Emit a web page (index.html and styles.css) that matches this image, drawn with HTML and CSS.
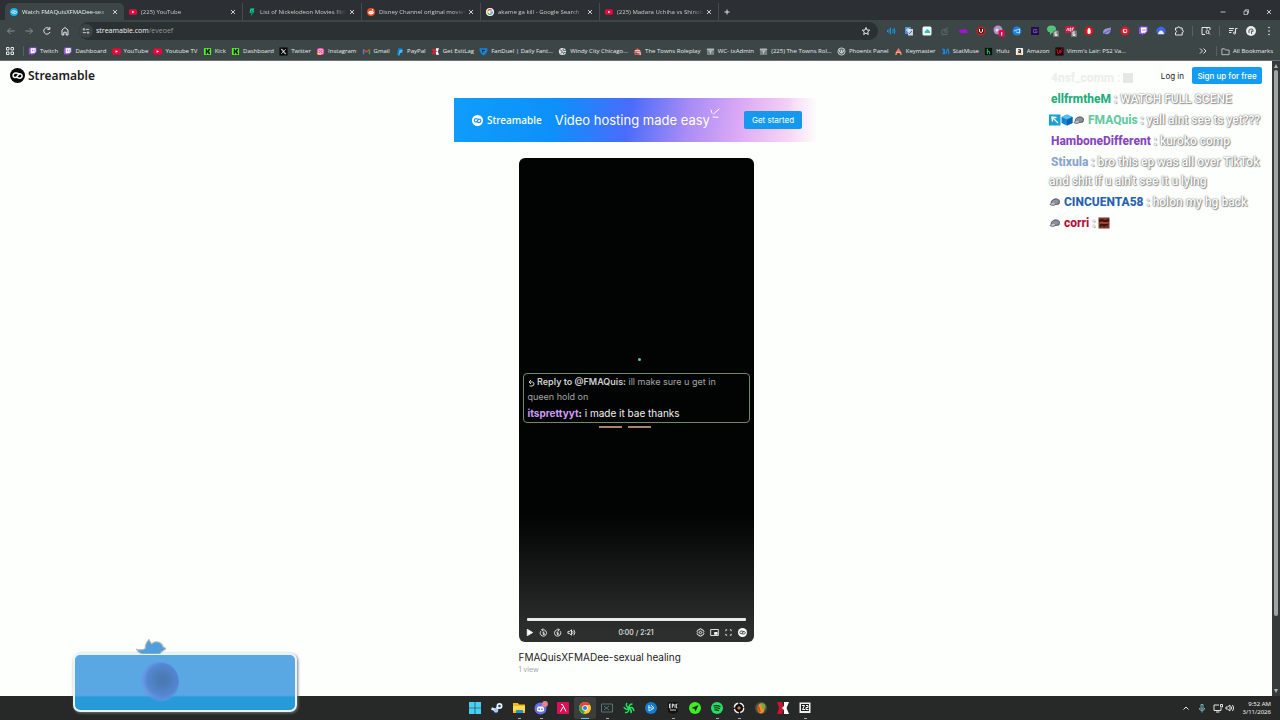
FILE: index.html
```html
<!DOCTYPE html>
<html lang="en">
<head>
<meta charset="utf-8">
<title>FMAQuisXFMADee-sexual healing</title>
<link rel="stylesheet" href="styles.css">
</head>
<body>
<svg class="defs" aria-hidden="true">
  <symbol id="loop" viewBox="0 0 16 16"><circle cx="8" cy="8" r="8" fill="currentColor" stroke="none"/><path class="loop-line" d="M9.500 6.100 6.700 5.400C4.400 5 3 6.600 3.300 8.300c.3 1.900 2.700 2.500 4 .9l1.600-2c1.200-1.600 3.700-1 4 .8.3 1.900-1.300 3.200-3.500 2.700L6.800 10" fill="none" stroke-width="1.600" stroke-linecap="round"/></symbol>
  <symbol id="close" viewBox="0 0 8 8"><path d="M2 2l4 4M6 2 2 6" stroke="#dfe3e4" stroke-width=".9"/></symbol>
  <symbol id="yt" viewBox="0 0 10 10"><rect x="0" y="1.500" width="10" height="7" rx="2" fill="#e5093b"/><path d="M4 3.500v3L6.700 5z" fill="#fff"/></symbol>
  <symbol id="twitch" viewBox="0 0 10 10"><path d="M2 .5h7.500v5L7 8H5.500L4 9.500V8H1V2.500z" fill="#9a58e8"/><path d="M3 1.500h5.500v3.700L7 6.700H5L4 7.600v-.9H3z" fill="#fff"/><path d="M5 3v2M7 3v2" stroke="#9a58e8" stroke-width=".8"/></symbol>
  <symbol id="kick" viewBox="0 0 10 10"><rect x="1" y="1" width="8" height="8" rx="1" fill="#4dfa1b"/><path d="M3 2h1.400v2h.8V3H6V2h1.800v2H7v2h.8v2H6V7h-.8V6h-.8v2H3z" fill="#10220c"/></symbol>
  <symbol id="box" viewBox="0 0 10 10"><rect x="1" y="1" width="8" height="8" rx="1" fill="#777f80"/><path d="M1 3h8M3 4.500h4M5 4.500v3" stroke="#c9cecf" fill="none"/></symbol>
  <symbol id="globe" viewBox="0 0 10 10"><circle cx="5" cy="5" r="4" fill="#e6eaea"/><path d="M2 3l2 1 1 2-2 1M6 1.500l-.5 2 2 .5 1.500-.5M6 8l.5-2 2 .2" stroke="#465052" fill="none"/></symbol>
  <symbol id="cap" viewBox="0 0 12 10"><path d="M2 5.500C3 1.500 9 .5 10.500 4l-.5 3-5 .7z" fill="#8b909d" stroke="#3f434c" stroke-width=".8"/><path d="M3 5.500 1 7.500c2 1.400 4.600 1 6-.8" fill="#c4c9d2" stroke="#333943" stroke-width=".7"/></symbol>
</svg>

<header class="browser">
  <div class="tabs">
    <div class="tab active"><svg class="ic tab-ic sky"><use href="#loop"/></svg><span>Watch FMAQuisXFMADee-sex</span><button aria-label="Close"><svg><use href="#close"/></svg></button></div>
    <div class="tab"><svg class="ic tab-ic"><use href="#yt"/></svg><span>(225) YouTube</span><button aria-label="Close"><svg><use href="#close"/></svg></button></div>
    <div class="tab"><svg class="ic tab-ic" viewBox="0 0 10 10"><path d="M3 .5h5L6.500 4H8L4 10l.5-4H2z" fill="#10d99a"/><path d="M5 2 4 5h2L4.500 8" stroke="#063" fill="none"/></svg><span>List of Nickelodeon Movies film</span><button aria-label="Close"><svg><use href="#close"/></svg></button></div>
    <div class="tab"><svg class="ic tab-ic" viewBox="0 0 10 10"><circle cx="5" cy="5" r="5" fill="#ef4a20"/><ellipse cx="5" cy="5.700" rx="3.400" ry="2.400" fill="#fff"/><circle cx="7" cy="2.300" r=".9" fill="#fff"/><path d="M3.600 5.200v.8M6.400 5.200v.8" stroke="#ef4a20"/></svg><span>Disney Channel original movies</span><button aria-label="Close"><svg><use href="#close"/></svg></button></div>
    <div class="tab"><svg class="ic tab-ic" viewBox="0 0 10 10"><circle cx="5" cy="5" r="5" fill="#fff"/><path d="M7.200 3A3 3 0 0 0 2.300 3.700" stroke="#ea4335" stroke-width="1.400" fill="none"/><path d="M2.300 3.700a3 3 0 0 0 0 2.600" stroke="#fbbc05" stroke-width="1.400" fill="none"/><path d="M2.300 6.300A3 3 0 0 0 7 7.200" stroke="#34a853" stroke-width="1.400" fill="none"/><path d="M7 7.200A3 3 0 0 0 8 5H5.200" stroke="#4285f4" stroke-width="1.400" fill="none"/></svg><span>akame ga kill - Google Search</span><button aria-label="Close"><svg><use href="#close"/></svg></button></div>
    <div class="tab"><svg class="ic tab-ic"><use href="#yt"/></svg><span>(225) Madara Uchiha vs Shinob</span><button aria-label="Close"><svg><use href="#close"/></svg></button></div>
    <button class="newtab" aria-label="New tab"><svg viewBox="0 0 8 8"><path d="M4 1.500v5M1.500 4h5" stroke="#dfe3e4"/></svg></button>
    <div class="window">
      <button aria-label="Minimize"><svg viewBox="0 0 8 8"><path d="M1.500 4h5" stroke="#dfe3e4" stroke-width=".8"/></svg></button>
      <button aria-label="Restore"><svg viewBox="0 0 8 8"><path d="M2 3h3.500v3.500H2zM3.200 3V1.800h3.300v3.400H5.500" stroke="#dfe3e4" stroke-width=".7" fill="none"/></svg></button>
      <button aria-label="Close window"><svg><use href="#close"/></svg></button>
    </div>
  </div>

  <div class="toolbar">
    <button class="cell dim" aria-label="Back"><svg viewBox="0 0 10 10"><path d="M8.500 5h-7M4.500 2l-3 3 3 3"/></svg></button>
    <button class="cell dim" aria-label="Forward"><svg viewBox="0 0 10 10"><path d="M1.500 5h7M5.500 2l3 3-3 3"/></svg></button>
    <button class="cell" aria-label="Reload"><svg viewBox="0 0 10 10"><path d="M8 6A3.200 3.200 0 1 1 7.300 2.700M7.800 1v2.400H5.400"/></svg></button>
    <button class="cell" aria-label="Home"><svg viewBox="0 0 10 10"><path d="M2 9V4l3-2.500L8 4v5H6.200V6.200H3.800V9z"/></svg></button>
    <div class="address">
      <span class="site"><svg viewBox="0 0 10 10"><circle cx="2.500" cy="3" r="1"/><path d="M5 3h4M1 7h4"/><circle cx="7.500" cy="7" r="1"/></svg></span>
      <span class="url"><b>streamable.com</b><i>/eveoef</i></span>
      <button class="cell" aria-label="Bookmark"><svg viewBox="0 0 10 10"><path d="M5 1.500 6 4l2.700.2-2 1.700.6 2.600L5 7.100 2.700 8.500l.6-2.600-2-1.700L4 4z"/></svg></button>
    </div>
    <button class="cell" aria-label="Volume"><svg viewBox="0 0 10 10" class="raw"><path d="M1.500 4v2M3 3v4M4.500 1.500v7M6.500 3q1.500 2 0 4M8 2q2 3 0 6" stroke="#1598dd" fill="none"/></svg></button>
    <button class="cell" aria-label="Translate"><svg viewBox="0 0 10 10" class="raw"><rect x="1" y="1" width="6" height="7" fill="#4a90dd"/><rect x="4" y="3" width="5" height="6.500" fill="#c9d4dd"/><circle cx="4" cy="4" r="1.300" stroke="#fff" fill="none" stroke-width=".8"/><path d="M5 8l3-3" stroke="#5b6a77"/></svg></button>
    <button class="cell" aria-label="Cloud"><svg viewBox="0 0 10 10" class="raw"><rect x=".5" y=".5" width="9" height="9" rx="1.500" fill="#eefbfa"/><path d="M2.500 6.500q0-2 1.500-2 1-2 2.500-.5Q8.500 5 8 7H3z" fill="#24c3c0"/></svg></button>
    <button class="cell" aria-label="Note"><svg viewBox="0 0 10 10" class="raw"><path d="M2 4h5v4.500H2zM4 4l4-2.500M4 6h2" stroke="#5e6768" fill="none"/></svg></button>
    <button class="cell" aria-label="Purple"><svg viewBox="0 0 10 10" class="raw"><path d="M.5 5 3 3.500h5L9.500 5v2H3z" fill="#aa0fe0"/></svg></button>
    <button class="cell" aria-label="Blocker"><svg viewBox="0 0 10 10" class="raw"><circle cx="5" cy="5" r="4.500" fill="#c51e20"/><circle cx="5" cy="5" r="3" fill="#4c1718"/><path d="M3.500 3v2.500q1.500 2 3 0V3" stroke="#fff" fill="none"/></svg></button>
    <button class="cell badge" aria-label="Alerts"><svg viewBox="0 0 12 12" class="raw"><circle cx="5" cy="5" r="4.500" fill="#b98bc9"/><circle cx="4" cy="5" r="1.500" fill="#e9e2ee"/><rect x="5.500" y="5" width="6.500" height="7" rx="1.500" fill="#c81450"/><path d="M8.700 7v3.500" stroke="#fff"/></svg></button>
    <button class="cell" aria-label="Share"><svg viewBox="0 0 10 10" class="raw"><circle cx="5" cy="5" r="4.500" fill="#1c82de"/><path d="M2 5l5.500-2v4L4 6" stroke="#d8f0ff" stroke-width=".8" fill="none"/></svg></button>
    <button class="cell" aria-label="Capture"><svg viewBox="0 0 10 10" class="raw"><rect x="1" y="1" width="8" height="8" fill="#241047"/><path d="M7 3.500H3.500v3H7V5H5" stroke="#6945b5" fill="none"/></svg></button>
    <button class="cell badge" aria-label="Messages"><svg viewBox="0 0 12 12" class="raw"><ellipse cx="4.500" cy="4" rx="4.500" ry="3.500" fill="#52c579"/><path d="M3 7v3l3-3" fill="#52c579"/><rect x="6" y="5.500" width="6" height="6.500" rx="1" fill="#777"/><path d="M10 7H8v3.500h2V9H8" stroke="#fff" stroke-width=".8" fill="none"/></svg></button>
    <button class="cell badge" aria-label="Ads"><svg viewBox="0 0 12 12" class="raw"><rect x="0" y="1" width="10" height="7" rx="1" fill="#c81845"/><path d="M1.500 6 3 3l1 3M5 3v3h1V3zM9 3H7.500v3" stroke="#fff" stroke-width=".7" fill="none"/><rect x="6" y="5.500" width="6" height="6.500" rx="1" fill="#777"/><path d="M10 7H8v3.500h2V9H8" stroke="#fff" stroke-width=".8" fill="none"/></svg></button>
    <button class="cell" aria-label="Stop"><svg viewBox="0 0 10 10" class="raw"><circle cx="5" cy="5" r="4.500" fill="#dd1420"/><path d="M3.500 4 4.500 2h1l1.200 2v3L5.500 8h-1L3.500 7z" fill="#fff"/></svg></button>
    <button class="cell" aria-label="Planet"><svg viewBox="0 0 10 10" class="raw"><path d="M1 7q0-4 3.500-4.500L9 1.500 8.500 5Q7 9 3.500 8z" fill="#9b93d8"/><path d="M1 8 8 4" stroke="#655dab"/></svg></button>
    <button class="cell" aria-label="Record"><svg viewBox="0 0 10 10" class="raw"><circle cx="5" cy="5" r="4.500" fill="#d31a2d"/><circle cx="5" cy="5" r="2.300" fill="#f8eaec"/><circle cx="5.300" cy="4.700" r="1.200" fill="#d31a2d"/></svg></button>
    <button class="cell" aria-label="Twitch"><svg class="raw"><use href="#twitch"/></svg></button>
    <button class="cell" aria-label="Nord"><svg viewBox="0 0 10 10" class="raw"><path d="M1.500 8a4.500 4.500 0 1 1 7 0z" fill="#3e66e4"/><path d="M1.800 8.300Q3 4.500 5 4.500t3.200 3.800z" fill="#e8eeff"/></svg></button>
    <button class="cell" aria-label="Extensions"><svg viewBox="0 0 10 10"><path d="M1.500 2h2q0-1.200 1.200-1.200T6 2h2.200v2.200q1.200 0 1.200 1.200T8.200 6.500V9H1.500V6.700q1-.2 1-1.200t-1-1.200z"/></svg></button>
    <span class="split"></span>
    <button class="cell" aria-label="Reading list"><svg viewBox="0 0 10 10"><path d="M4 8.500H1v-7h8v2.500M6 1.500v2"/><circle cx="6.500" cy="6" r="1.500"/><path d="M7.500 7 9 8.500"/></svg></button>
    <span class="split"></span>
    <button class="cell" aria-label="Media"><svg viewBox="0 0 10 10"><path d="M1 2.500h5M1 4.500h4M1 6.500h2.500M7.500 7V2.500h2"/><circle cx="6.500" cy="7" r="1"/></svg></button>
    <button class="cell" aria-label="Profile"><svg viewBox="0 0 10 10" class="raw"><circle cx="5" cy="5" r="5" fill="#e9eceb"/><path d="M3 7V4q2-2 4-.5v2L5.500 5v3" stroke="#555e60" fill="none"/></svg></button>
    <button class="cell" aria-label="Menu"><svg viewBox="0 0 10 10" class="raw"><g fill="#e4e8e8"><circle cx="5" cy="1.500" r=".8"/><circle cx="5" cy="5" r=".8"/><circle cx="5" cy="8.500" r=".8"/></g></svg></button>
  </div>

  <nav class="bookmarks">
    <button class="cell" aria-label="Apps"><svg viewBox="0 0 10 10"><path d="M1.500 1.500h2.500V4H1.500zM6 1.500h2.500V4H6zM1.500 6h2.500v2.500H1.500zM6 6h2.500v2.500H6z"/></svg></button>
    <span class="split"></span>
    <div class="marks">
      <a href="#"><svg class="ic"><use href="#twitch"/></svg>Twitch</a>
      <a href="#"><svg class="ic"><use href="#twitch"/></svg>Dashboard</a>
      <a href="#"><svg class="ic"><use href="#yt"/></svg>YouTube</a>
      <a href="#"><svg class="ic"><use href="#yt"/></svg>Youtube TV</a>
      <a href="#"><svg class="ic"><use href="#kick"/></svg>Kick</a>
      <a href="#"><svg class="ic"><use href="#kick"/></svg>Dashboard</a>
      <a href="#"><svg class="ic" viewBox="0 0 10 10"><rect x=".5" y=".5" width="9" height="9" fill="#090b0b"/><path d="M2.500 2.500h1l4 5h-1zM7.500 2.500l-5 5" stroke="#fff" stroke-width=".8" fill="none"/></svg>Twitter</a>
      <a href="#"><svg class="ic" viewBox="0 0 10 10"><rect x="1" y="1" width="8" height="8" rx="2" fill="#df3a91"/><path d="M1 7q4-1 5 2H3Q1 9 1 7z" fill="#f8a72b"/><rect x="2.500" y="2.500" width="5" height="5" rx="1.300" fill="none" stroke="#fff" stroke-width=".8"/><circle cx="5" cy="5" r="1" fill="none" stroke="#fff" stroke-width=".7"/></svg>Instagram</a>
      <a href="#"><svg class="ic" viewBox="0 0 10 10"><path d="M1.700 8V3" stroke="#4285f4" stroke-width="1.500"/><path d="M1.500 2.800 5 5.500l3.500-2.700" stroke="#ea4335" stroke-width="1.500" fill="none"/><path d="M8.300 3.500V8" stroke="#34a853" stroke-width="1.500"/></svg>Gmail</a>
      <a href="#"><svg class="ic" viewBox="0 0 10 10"><path d="M3.500 1h3Q9 1.500 8 4 7 6 4.500 6L4 8.500H2z" fill="#1273c7"/><path d="M5 3h3.500Q9 6.500 5.500 7L5 9.500H3.500z" fill="#41bdf0"/></svg>PayPal</a>
      <a href="#"><svg class="ic" viewBox="0 0 10 10"><path d="M1 2h3.500L6 5 4.500 8H1l1-3z" fill="#d92137"/><path d="M5.500 1.500H9L7.500 5 9 8.500H5.500V6l1-1-1-1z" fill="#fff"/></svg>Get ExitLag</a>
      <a href="#"><svg class="ic" viewBox="0 0 10 10"><path d="M.5 1.500h9Q9.500 7 5 9.500.5 7 .5 1.500z" fill="#1385dd"/><path d="M3 3h4L6 4.500H4.500L5 7Q3 6 3 3" fill="#12334e"/></svg>FanDuel | Daily Fant...</a>
      <a href="#"><svg class="ic"><use href="#globe"/></svg>Windy City Chicago...</a>
      <a href="#"><svg class="ic" viewBox="0 0 10 10"><path d="M1 5 5 1l4 4v4H2z" fill="#d95a52"/><path d="M2 4h6M3 6h5v3" stroke="#f3e1d9" fill="none"/><circle cx="4" cy="7" r="1" fill="#275f79"/></svg>The Towns Roleplay</a>
      <a href="#"><svg class="ic"><use href="#box"/></svg>WC- txAdmin</a>
      <a href="#"><svg class="ic"><use href="#box"/></svg>(225) The Towns Rol...</a>
      <a href="#"><svg class="ic" viewBox="0 0 10 10"><circle cx="5" cy="5" r="4" fill="#59676a" stroke="#ccd1d1"/><path d="M3 3v2.500q2 2 4 0V3M5 3v4" stroke="#e0e4e4" fill="none"/></svg>Phoenix Panel</a>
      <a href="#"><svg class="ic" viewBox="0 0 10 10"><path d="M1 9 3 4l2-3 2 3 2 5H7L6 6H4L3 9z" fill="#ee7168"/><path d="M2 6h6" stroke="#fac3ac"/></svg>Keymaster</a>
      <a href="#"><svg class="ic" viewBox="0 0 10 10"><path d="M1 2.500h2v5H1M4 8V2.500M5.500 8l1.500-5.500h1L9 8" stroke="#1588df" stroke-width="1.200" fill="none"/></svg>StatMuse</a>
      <a href="#"><svg class="ic" viewBox="0 0 10 10"><rect x="1" y="1" width="8" height="8" fill="#071109"/><path d="M3.700 2v6M3.700 5q2.500-1 2.500.8V8" stroke="#19de67" fill="none"/></svg>Hulu</a>
      <a href="#"><svg class="ic" viewBox="0 0 10 10"><rect x="1" y="1" width="8" height="8" rx="1" fill="#f4f2e8"/><path d="M3.500 3h2.700v3.500M6 4.500q-2.500 0-2.500 1t2.500.5" stroke="#111" fill="none"/><path d="M2.500 7.500q2.500 1.200 5 0" stroke="#f2a829" fill="none"/></svg>Amazon</a>
      <a href="#"><svg class="ic" viewBox="0 0 10 10"><rect x=".5" y=".5" width="9" height="9" fill="#170306"/><path d="M2 2l1.500 6L8 1.500M5 3l1 4 2-3" stroke="#dc1227" fill="none"/></svg>Vimm's Lair: PS2 Va...</a>
    </div>
    <button class="cell" aria-label="More bookmarks"><svg viewBox="0 0 10 10"><path d="M2 2.500 4.500 5 2 7.500M5.500 2.500 8 5 5.500 7.500"/></svg></button>
    <span class="split"></span>
    <a class="all" href="#"><svg class="ic" viewBox="0 0 10 10"><path d="M1 2h3l1 1.300h4V8.500H1z" fill="none" stroke="#cfd4d4" stroke-width=".9"/></svg>All Bookmarks</a>
  </nav>
</header>

<div class="page">
  <div class="content">
    <div class="sitebar">
      <a class="brand" href="#"><svg><use href="#loop"/></svg>Streamable</a>
      <a class="login" href="#">Log in</a>
      <button class="signup">Sign up for free</button>
    </div>
    <main>
      <section class="promo">
        <a class="brand" href="#"><svg><use href="#loop"/></svg>Streamable</a>
        <strong>Video hosting made easy</strong>
        <svg class="spark" viewBox="0 0 10 12"><path d="M2 5 1 2M3.500 6 9 1M3 9l5 .3" stroke="#fff" fill="none" stroke-linecap="round"/></svg>
        <button>Get started</button>
      </section>
      <section class="player">
        <span class="dot"></span>
        <div class="reply">
          <p class="quote"><svg viewBox="0 0 7 8"><path d="M3 1 1 3l2 2M1 3h3.500Q6 3.200 6 5T4 7H1.500" stroke="#d4d6d4" fill="none"/></svg> <b>Reply to @FMAQuis:</b> ill make sure u get in queen hold on</p>
          <p class="answer"><b>itsprettyyt</b><strong>:</strong> i made it bae thanks</p>
        </div>
        <div class="marksline"><span></span><span></span></div>
        <div class="controls">
          <input type="range" min="0" max="141" value="0" aria-label="Seek">
          <div class="buttons">
            <button aria-label="Play"><svg viewBox="0 0 10 10"><path d="M2.500 1.500v7L8.500 5z" fill="#fff"/></svg></button>
            <button aria-label="Back 5 seconds"><svg viewBox="0 0 10 10"><path d="M2 3.500A3.500 3.500 0 1 0 5 2H3M4.500.5 3 2l1.500 1.500M6 4.500H4.500V6H6v1.200H4.500"/></svg></button>
            <button aria-label="Forward 5 seconds"><svg viewBox="0 0 10 10"><path d="M8 3.500A3.500 3.500 0 1 1 5 2h2M5.500.5 7 2 5.500 3.500M6 4.500H4.500V6H6v1.200H4.500"/></svg></button>
            <button aria-label="Mute"><svg viewBox="0 0 10 10"><path d="M1 4h1.500L5 2v6L2.500 6H1zM6.200 3.500q1.200 1.500 0 3M7.500 2q2.500 3 0 6"/></svg></button>
            <time>0:00 / 2:21</time>
            <button aria-label="Settings"><svg viewBox="0 0 10 10"><path d="M4 1h2l.4 1.200 1.400-.1 1 1.700L8 5l.8 1.200-1 1.700-1.400-.1L6 9H4l-.4-1.200-1.400.1-1-1.700L2 5l-.8-1.200 1-1.700 1.400.1z"/><circle cx="5" cy="5" r="1.300"/></svg></button>
            <button aria-label="Picture in picture"><svg viewBox="0 0 10 10"><path d="M.7 1.700h8.600v6.600H.7z"/><path d="M5 5h3v2H5z" fill="#fff"/></svg></button>
            <button aria-label="Full screen"><svg viewBox="0 0 10 10"><path d="M2 3.500V2h1.500M6.500 2H8v1.500M8 6.500V8H6.500M3.500 8H2V6.500"/></svg></button>
            <button class="mini" aria-label="Streamable"><svg><use href="#loop"/></svg></button>
          </div>
        </div>
      </section>
      <section class="meta">
        <h1>FMAQuisXFMADee-sexual healing</h1>
        <p>1 view</p>
      </section>
    </main>
  </div>
  <div class="scroll"><i class="up"></i><div class="thumb"></div><i class="down"></i></div>

  <ul class="chat">
    <li class="faded"><b>4nsf_comm</b> : <span class="block"></span></li>
    <li><b class="green">ellfrmtheM</b> : WATCH FULL SCENE</li>
    <li><svg viewBox="0 0 12 12"><rect x="0" y=".5" width="11.500" height="11" fill="#1ba0d2"/><path d="M3 3l6 6M3.500 7.500 3 3l4.500.5" stroke="#fff" stroke-width="1.300" fill="none"/></svg><svg viewBox="0 0 12 12"><path d="M.5 3 6 .5 11.500 3v6L6 11.500.5 9z" fill="#1582cf"/><path d="M.5 3 6 .5 11.500 3 6 5.500z" fill="#55c2f0"/><path d="M6 5.500 11.500 3v6L6 11.500z" fill="#0a65ae"/></svg><svg><use href="#cap"/></svg><b class="mint">FMAQuis</b> : yall aint see ts yet???</li>
    <li><b class="purple">HamboneDifferent</b> : kuroko comp</li>
    <li><b class="slate">Stixula</b> : bro this ep was all over TikTok<br>and shit if u ain't see it u lying</li>
    <li><svg><use href="#cap"/></svg><b class="blue">CINCUENTA58</b> : holon my hg back</li>
    <li><svg><use href="#cap"/></svg><b class="red">corri</b> : <svg viewBox="0 0 12 12"><rect x=".5" y=".5" width="11" height="11" fill="#843425"/><path d="M1 4l3-1 3 1.500L11 3M2 9l2-2 2 1.500L10 7" stroke="#321716" stroke-width="2" fill="none"/><path d="M2 6h8" stroke="#d95b45"/></svg></li>
  </ul>
</div>

<footer class="taskbar">
  <div class="apps">
    <button aria-label="Start"><svg viewBox="0 0 12 12"><path d="M0 0h5.700v5.700H0zM6.300 0H12v5.700H6.300zM0 6.300h5.700V12H0zM6.300 6.300H12V12H6.300z" fill="#45cff3"/></svg></button>
    <button aria-label="Steam"><svg viewBox="0 0 12 12"><path d="M.5 6.500l4 1.500L8 4.500" stroke="#d8eaf8" stroke-width="2.500" fill="none"/><circle cx="8.500" cy="4" r="3" fill="#eef5fb"/><circle cx="8.500" cy="4" r="1.300" fill="#27496a"/><circle cx="5" cy="8.500" r="2.300" fill="#9ccdf6"/></svg></button>
    <button class="run" aria-label="Files"><svg viewBox="0 0 12 12"><path d="M0 1h5l1 1.500h6V11H0z" fill="#f3b917"/><path d="M0 4h12v5H0z" fill="#ffdb4d"/><path d="M3 8h7v3H3z" fill="#2590de"/></svg></button>
    <button class="run" aria-label="Discord"><svg class="big" viewBox="0 0 14 14"><circle cx="6.500" cy="7.500" r="6" fill="#6672e8"/><path d="M3 10q-.5-3 1-4.500h5q1.500 1.500 1 4.500-3.500 1.500-7 0z" fill="#fff"/><circle cx="5.200" cy="8.200" r=".9" fill="#6672e8"/><circle cx="7.900" cy="8.200" r=".9" fill="#6672e8"/><circle cx="11" cy="3" r="2.900" fill="#e58491"/></svg></button>
    <button aria-label="Lambda"><svg viewBox="0 0 12 12"><rect width="12" height="12" fill="#d81157"/><path d="M4 2.500h1.500L9 9.500M6 5 3.500 9.500" stroke="#fff" fill="none"/></svg></button>
    <button class="current" aria-label="Chrome"><svg viewBox="0 0 12 12"><circle cx="6" cy="6" r="6" fill="#fbc52b"/><path d="M.8 3A6 6 0 0 1 11.200 3H6L4 8z" fill="#e5423c"/><path d="M.8 3 4 8l2 .8L4.500 11.800A6 6 0 0 1 .8 3z" fill="#2da850"/><circle cx="6" cy="6" r="2.800" fill="#fff"/><circle cx="6" cy="6" r="2.100" fill="#3579e8"/></svg></button>
    <button class="run" aria-label="Monitor"><svg viewBox="0 0 12 12"><path d="M.5 2h11v8H.5zM3 4l5 4M8 4 3 8" stroke="#557571" fill="none"/></svg></button>
    <button aria-label="Razer"><svg viewBox="0 0 12 12"><path d="M6 6Q2 4 4 1M6 6Q3 9 .8 5M6 6q0 5-4 4.500M6 6q3 2 2 5M6 6q4-2 5 3M6 6Q6 2 9.500 2" stroke="#1ee65a" stroke-width="1.500" fill="none"/></svg></button>
    <button aria-label="Battle"><svg viewBox="0 0 12 12"><circle cx="6" cy="6" r="6" fill="#167bcd"/><path d="M4 3v6l4.500-2.500L3 5" stroke="#b9efff" fill="none"/><path d="M6 3l3 3" stroke="#b9efff"/></svg></button>
    <button class="run" aria-label="Epic Games"><svg viewBox="0 0 12 12"><path d="M1 0h10v10l-5 2-5-2z" fill="#101111"/><path d="M4 2H2.500v4H4M2.500 4H4M5.300 6V2h1v2h-1M8 2v4M10.500 2H9.400v4h1M3 8h6" stroke="#fff" stroke-width=".8" fill="none"/></svg></button>
    <button aria-label="Green arrow"><svg viewBox="0 0 12 12"><circle cx="6" cy="6" r="6" fill="#40ec25"/><path d="M2.500 6 9.500 3 6.500 9.500 5.500 6.700z" fill="#10290e"/></svg></button>
    <button class="run" aria-label="Spotify"><svg viewBox="0 0 12 12"><circle cx="6" cy="6" r="6" fill="#26df64"/><path d="M2.500 4q4-1 7 .8M3 6q3.500-.8 6 .8M3.500 8q2.500-.5 4.500.8" stroke="#102b19" stroke-width="1.100" fill="none"/></svg></button>
    <button class="run" aria-label="Ring"><svg viewBox="0 0 12 12"><circle cx="6" cy="6" r="5.800" fill="#0c0d0d"/><circle cx="6" cy="6" r="4.700" fill="none" stroke="#f2f2f1" stroke-width="1.500" stroke-dasharray="6 1.400"/><path d="m6 4 2 2-2 2-2-2z" fill="#df7437"/></svg></button>
    <button aria-label="FL Studio"><svg viewBox="0 0 12 12"><circle cx="6" cy="6" r="6" fill="#4b5146"/><ellipse cx="6" cy="6.500" rx="3.500" ry="5" fill="#f09126"/><path d="M6 1q5 0 4.500 5L7 7z" fill="#73ad3f"/><path d="M3 4l2 6" stroke="#d34a28" stroke-width="2"/></svg></button>
    <button aria-label="ExitLag"><svg viewBox="0 0 12 12"><path d="M0 0h5l2 6-2 6H0l2-6z" fill="#c6162f"/><path d="M7 0h5L9.500 6 12 12H7V8L5 6l2-2z" fill="#fff"/></svg></button>
    <button class="run" aria-label="Editor"><svg viewBox="0 0 12 12"><rect x=".5" y=".5" width="11" height="10.500" fill="#f0f1ef"/><path d="M2 2h8v7H2z" fill="#1d1f1f"/><path d="M3 3.500h2.500L3.500 7.500H6M7 3.500h2v2H7v2h2.500" stroke="#fff" fill="none"/></svg></button>
  </div>
  <div class="tray">
    <svg viewBox="0 0 10 10"><path d="M2.500 6.500 5 4l2.500 2.500"/></svg>
    <svg class="mic" viewBox="0 0 10 10"><path d="M4 1.500h2V6H4zM2.300 5q0 2.500 2.700 2.500T7.700 5M5 7.500V9.500"/></svg>
    <svg viewBox="0 0 10 10"><path d="M6 2H1v5.500h7V5M3 9h3.500M7.500 1.500h2V4h-2z"/></svg>
    <svg viewBox="0 0 10 10"><path d="M1 4h1.500L5 2v6L2.500 6H1zM6.200 3.500q1.200 1.500 0 3M7.500 2q2.500 3 0 6"/></svg>
    <time>9:52 AM<br>3/11/2026</time>
  </div>
</footer>

<aside class="stream-card">
  <svg class="bird" viewBox="0 0 28 14"><path d="M.5 9.500q4 1.500 8-.5 0-5 3.500-8.500l2.500 4q3-3 7-1.500 3 1 3.500 4l3 2-4 3-2 2H6Q2 13 .5 9.500z" fill="#4f9fdd" stroke="#b9b9b3" stroke-width="1"/></svg>
  <span class="orb"></span>
</aside>
</body>
</html>
```
FILE: styles.css
```css
* { box-sizing: border-box; }
body { margin: 0; height: 100vh; display: flex; flex-direction: column; position: relative; overflow: hidden; background: #fdfffd; color: #1d2021; font-family: Inter, "Open Sans", sans-serif; }
button { border: 0; padding: 0; margin: 0; background: none; color: inherit; font: inherit; display: flex; align-items: center; justify-content: center; }
a { color: inherit; text-decoration: none; }
p, h1, ul { margin: 0; padding: 0; }
.defs { position: absolute; width: 0; height: 0; }
.loop-line { stroke: var(--loop-line, #fff); }
.ic { width: 9px; height: 9px; flex: none; }

/* browser frame */
.browser { background: #3d4647; color: #e8ebeb; font: 500 6px/10px "Open Sans", sans-serif; }
.tabs { height: 20px; display: flex; align-items: stretch; padding: 3px 5px 0; background: #2c3034; }
.tab { width: 119px; display: flex; align-items: center; padding: 0 5px; border-right: 1px solid #454b4e; color: #c9cdce; }
.tab.active { background: #3d4647; border-radius: 5px 5px 0 0; border: 0; color: #edf0f0; }
.tab .tab-ic { width: 8px; height: 8px; margin-right: 4px; }
.sky { color: #1cabe8; }
.tab span { flex: 1; overflow: hidden; white-space: nowrap; mask-image: linear-gradient(90deg, #000 85%, transparent); }
.tab button { margin-left: 1px; }
.tab button svg, .newtab svg, .window svg { width: 8px; height: 8px; }
.newtab { width: 16px; }
.window { margin-left: auto; display: flex; gap: 15px; padding-right: 2px; }
.toolbar { height: 22px; display: flex; align-items: center; padding: 0 2px; }
.cell { width: 18px; height: 18px; flex: none; }
.cell svg { width: 10px; height: 10px; fill: none; stroke: #e4e8e8; stroke-width: 1; }
.cell svg.raw { stroke: none; }
.badge svg { width: 12px; height: 12px; }
.dim { opacity: .45; }
.address { flex: 1; height: 18px; margin: 0 4px 0 5px; border-radius: 9px; background: #2b3033; display: flex; align-items: center; padding-right: 3px; }
.site { width: 14px; height: 14px; margin-right: 3px; border-radius: 50%; background: #3d4446; display: flex; align-items: center; justify-content: center; }
.site svg { width: 8px; height: 8px; fill: none; stroke: #e4e8e8; }
.url { flex: 1; font-size: 7px; }
.url b { font-weight: 500; color: #f2f4f4; }
.url i { font-style: normal; color: #92999b; }
.split { width: 9px; height: 10px; display: flex; justify-content: center; }
.split::before { content: ""; width: 1px; background: #596163; }
.bookmarks { height: 18px; display: flex; align-items: center; padding: 0 7px 0 1px; }
.marks { flex: 1; display: flex; justify-content: space-between; margin-right: 68px; }
.marks a, .all { display: flex; align-items: center; gap: 3px; white-space: nowrap; }

/* site */
.page { flex: 1; min-height: 0; display: flex; position: relative; border-top: 1px solid #6b7172; }
.content { flex: 1; min-width: 0; }
.sitebar { height: 29px; display: flex; align-items: center; padding: 0 10px; font-size: 8px; }
.brand { display: flex; align-items: center; gap: 3px; font: 600 12px/16px "Noto Sans", sans-serif; }
.brand svg { width: 15px; height: 15px; color: #090909; }
.login { margin: 0 8px 0 auto; }
.signup { width: 70px; height: 17px; border-radius: 2px; background: #149cf3; color: #fff; font-weight: 500; }
main { display: flex; flex-direction: column; align-items: center; padding-top: 8px; }
.promo { width: 364px; height: 44px; display: flex; align-items: center; padding: 0 16px 0 18px; color: #fff; background: linear-gradient(90deg, transparent 92%, #fdfffd 100%), linear-gradient(100deg, #0f9dfb 0%, #0d90fa 28%, #4a6cfb 48%, #a98cf5 64%, #dcaaf5 78%, #f7d6f6 92%); }
.promo .brand { --loop-line: #168ff8; gap: 4px; font-size: 10px; font-weight: 500; }
.promo .brand svg { width: 11px; height: 11px; color: #fff; }
.promo strong { margin-left: 13px; font-weight: 400; font-size: 13px; }
.spark { width: 10px; height: 12px; margin-bottom: 12px; }
.promo button { width: 58px; height: 18px; margin-left: auto; border-radius: 2px; background: #1599ee; font-size: 8px; }
.player { width: 235px; height: 484px; margin-top: 16px; border-radius: 6px; background: linear-gradient(#020403 74%, #2d2f2e 98%); display: flex; flex-direction: column; align-items: stretch; padding: 200px 4px 3px; }
.dot { width: 3px; height: 3px; margin-left: 115px; border-radius: 50%; background: #55cfae; }
.reply { margin-top: 12px; padding: 0 4px; border: 1px solid #718967; border-radius: 4px; height: 50px; color: #a4a7a5; font-size: 9px; line-height: 15px; }
.quote svg { width: 7px; height: 8px; vertical-align: -2px; }
.quote b { color: #cccfcd; font-weight: 600; }
.answer { color: #f1f2f1; font-size: 10px; line-height: 18px; }
.answer b { color: #ce9af6; }
.marksline { display: flex; gap: 6px; margin: 3px 0 0 76px; }
.marksline span { width: 23px; height: 2px; background: #a88370; }
.controls { margin: auto 4px 0; }
.controls input { display: block; width: 100%; height: 3px; margin: 0; appearance: none; background: #e9ebea; border-radius: 1px; }
.controls input::-webkit-slider-thumb { appearance: none; width: 0; height: 0; }
.buttons { display: flex; align-items: center; height: 14px; margin: 4px -4px 0; }
.buttons button { width: 14px; height: 14px; }
.buttons svg { width: 9px; height: 9px; fill: none; stroke: #f1f3f2; stroke-width: 1; }
.buttons .mini { --loop-line: #2d2f2e; color: #fff; }
.buttons time { margin: 0 auto; color: #fff; font-size: 7px; }
.meta { width: 235px; margin-top: 7px; }
.meta h1 { font-size: 10px; line-height: 16px; font-weight: 400; }
.meta p { font-size: 7px; line-height: 10px; color: #a5a8a6; }
.scroll { width: 8px; background: #383b3b; display: flex; flex-direction: column; align-items: center; padding: 3px 0; gap: 2px; }
.thumb { width: 4px; flex: 0 1 546px; border-radius: 2px; background: #a2a5a5; }
.up { border: 2px solid transparent; border-top: 0; border-bottom: 4px solid #b1b4b4; }
.down { margin-top: auto; border: 2px solid transparent; border-bottom: 0; border-top: 4px solid #b1b4b4; }

/* chat laid over the page */
.chat { position: absolute; top: 8px; right: 0; width: 231px; list-style: none; display: flex; flex-direction: column; gap: 2px; color: #fff; font: 500 12px/19px Roboto, sans-serif; text-shadow: 0 0 1px #777, 0 0 2px #888, 1px 1px 1px #999; white-space: nowrap; pointer-events: none; }
.chat li b { margin-left: 2px; font-weight: 800; text-shadow: 0 0 1px #fff; }
.chat svg { width: 12px; height: 12px; vertical-align: -2px; }
.chat svg + b { margin-left: 3px; }
.chat .faded { color: #eceeec; text-shadow: none; }
.block { display: inline-block; width: 10px; height: 10px; background: #e6e8e6; vertical-align: -1px; }
.green { color: #1fae7d; }
.mint { color: #65c9a2; }
.purple { color: #8746bd; }
.slate { color: #88a4c9; }
.blue { color: #2861ad; }
.red { color: #b50f3d; }

/* taskbar */
.taskbar { height: 24px; display: grid; grid-template-columns: 1fr auto 1fr; align-items: center; background: #272928; color: #f0f2f1; }
.apps { grid-column: 2; display: flex; }
.apps button { position: relative; width: 22px; height: 22px; border-radius: 2px; }
.apps svg { width: 12px; height: 12px; }
.apps .big { width: 14px; height: 14px; }
.run::after, .current::after { content: ""; position: absolute; bottom: 0; width: 3px; height: 1px; background: #a9acab; }
.current { background: #3b3e3d; }
.current::after { width: 8px; background: #5dcdf4; }
.tray { justify-self: end; display: flex; align-items: center; gap: 2px; padding-right: 9px; }
.tray svg { width: 10px; height: 10px; fill: none; stroke: #e3e6e5; stroke-width: 1; }
.tray .mic { stroke: #77b5b9; margin: 0 4px; }
.tray time { margin-left: 6px; font: 400 6px/8px "Noto Sans", sans-serif; text-align: right; }

/* card laid over the page and the taskbar */
.stream-card { position: absolute; left: 73px; bottom: 8px; width: 224px; height: 59px; border: 2px solid #e9f3f8; border-radius: 7px; background: linear-gradient(#59a8e4 73%, #279bd9 77%); box-shadow: 1px 1px 3px #777; }
.bird { position: absolute; left: 61px; top: -16px; width: 30px; height: 15px; }
.orb { position: absolute; left: 65px; top: 7px; width: 39px; height: 40px; border-radius: 50%; background: radial-gradient(circle at 58% 45%, #4a7bb5 15%, #5587d2 50%, #6e91e3aa 62%, transparent 72%); }
```
